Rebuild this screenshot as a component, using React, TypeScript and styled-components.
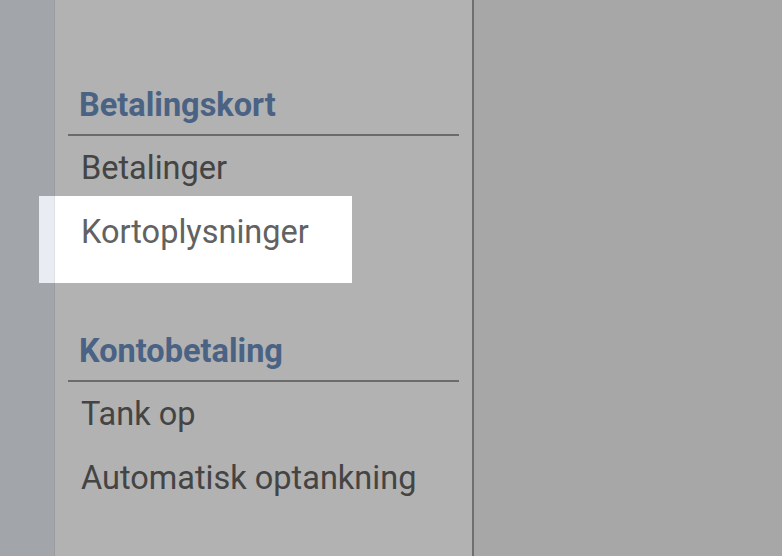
import styled, { createGlobalStyle } from 'styled-components'

const GlobalStyle = createGlobalStyle`
  html, body {
    margin: 0;
    padding: 0;
    height: 100%;
    overflow: hidden;
  }
  #root {
    height: 100%;
  }
  body {
    font-family: Roboto, "Noto Sans", "Liberation Sans", sans-serif;
  }
`

type Section = {
  title: string
  items: string[]
}

const sections: Section[] = [
  { title: 'Betalingskort', items: ['Betalinger', 'Kortoplysninger'] },
  { title: 'Kontobetaling', items: ['Tank op', 'Automatisk optankning'] }
]

function App () {
  return (
    <Page>
      <GlobalStyle />
      <Rail />
      <Sidebar>
        {sections.map((section) => (
          <Group key={section.title}>
            <GroupTitle>{section.title}</GroupTitle>
            <Rule />
            {section.items.map((item) => (
              <NavItem key={item}>{item}</NavItem>
            ))}
          </Group>
        ))}
      </Sidebar>
      <Content />
      <Spotlight />
    </Page>
  )
}

const Page = styled.div`
  position: relative;
  display: flex;
  height: 100%;
  overflow: hidden;
  background: #efefef;
`

const Rail = styled.div`
  width: 54px;
  flex-shrink: 0;
  background: #e9ecf3;
  border-right: 1px solid #dde0e7;
`

const Sidebar = styled.nav`
  width: 419px;
  flex-shrink: 0;
  box-sizing: border-box;
  padding: 86px 13px 0 13px;
  background: #ffffff;
  border-right: 2px solid #9f9f9f;
  display: flex;
  flex-direction: column;
  gap: 68px;
`

const Group = styled.section`
  display: flex;
  flex-direction: column;
`

const GroupTitle = styled.h2`
  margin: 0 0 10px;
  padding-left: 11px;
  font-size: 32.5px;
  line-height: 38px;
  font-weight: 700;
  color: #6a8dbe;
`

const Rule = styled.hr`
  margin: 0;
  border: 0;
  height: 2px;
  background: #9a9a9a;
`

const NavItem = styled.a`
  display: flex;
  align-items: center;
  height: 64px;
  padding-left: 13px;
  font-size: 32.5px;
  line-height: 38px;
  color: #626262;
  cursor: pointer;
`

const Content = styled.main`
  flex: 1;
  background: #efefef;
`

// tour highlight: a clear window cut into the dimmed page
const Spotlight = styled.div`
  position: absolute;
  left: 39px;
  top: 196px;
  width: 313px;
  height: 87px;
  box-shadow: 0 0 0 2000px rgba(0, 0, 0, 0.3);
  pointer-events: none;
`

export default App
